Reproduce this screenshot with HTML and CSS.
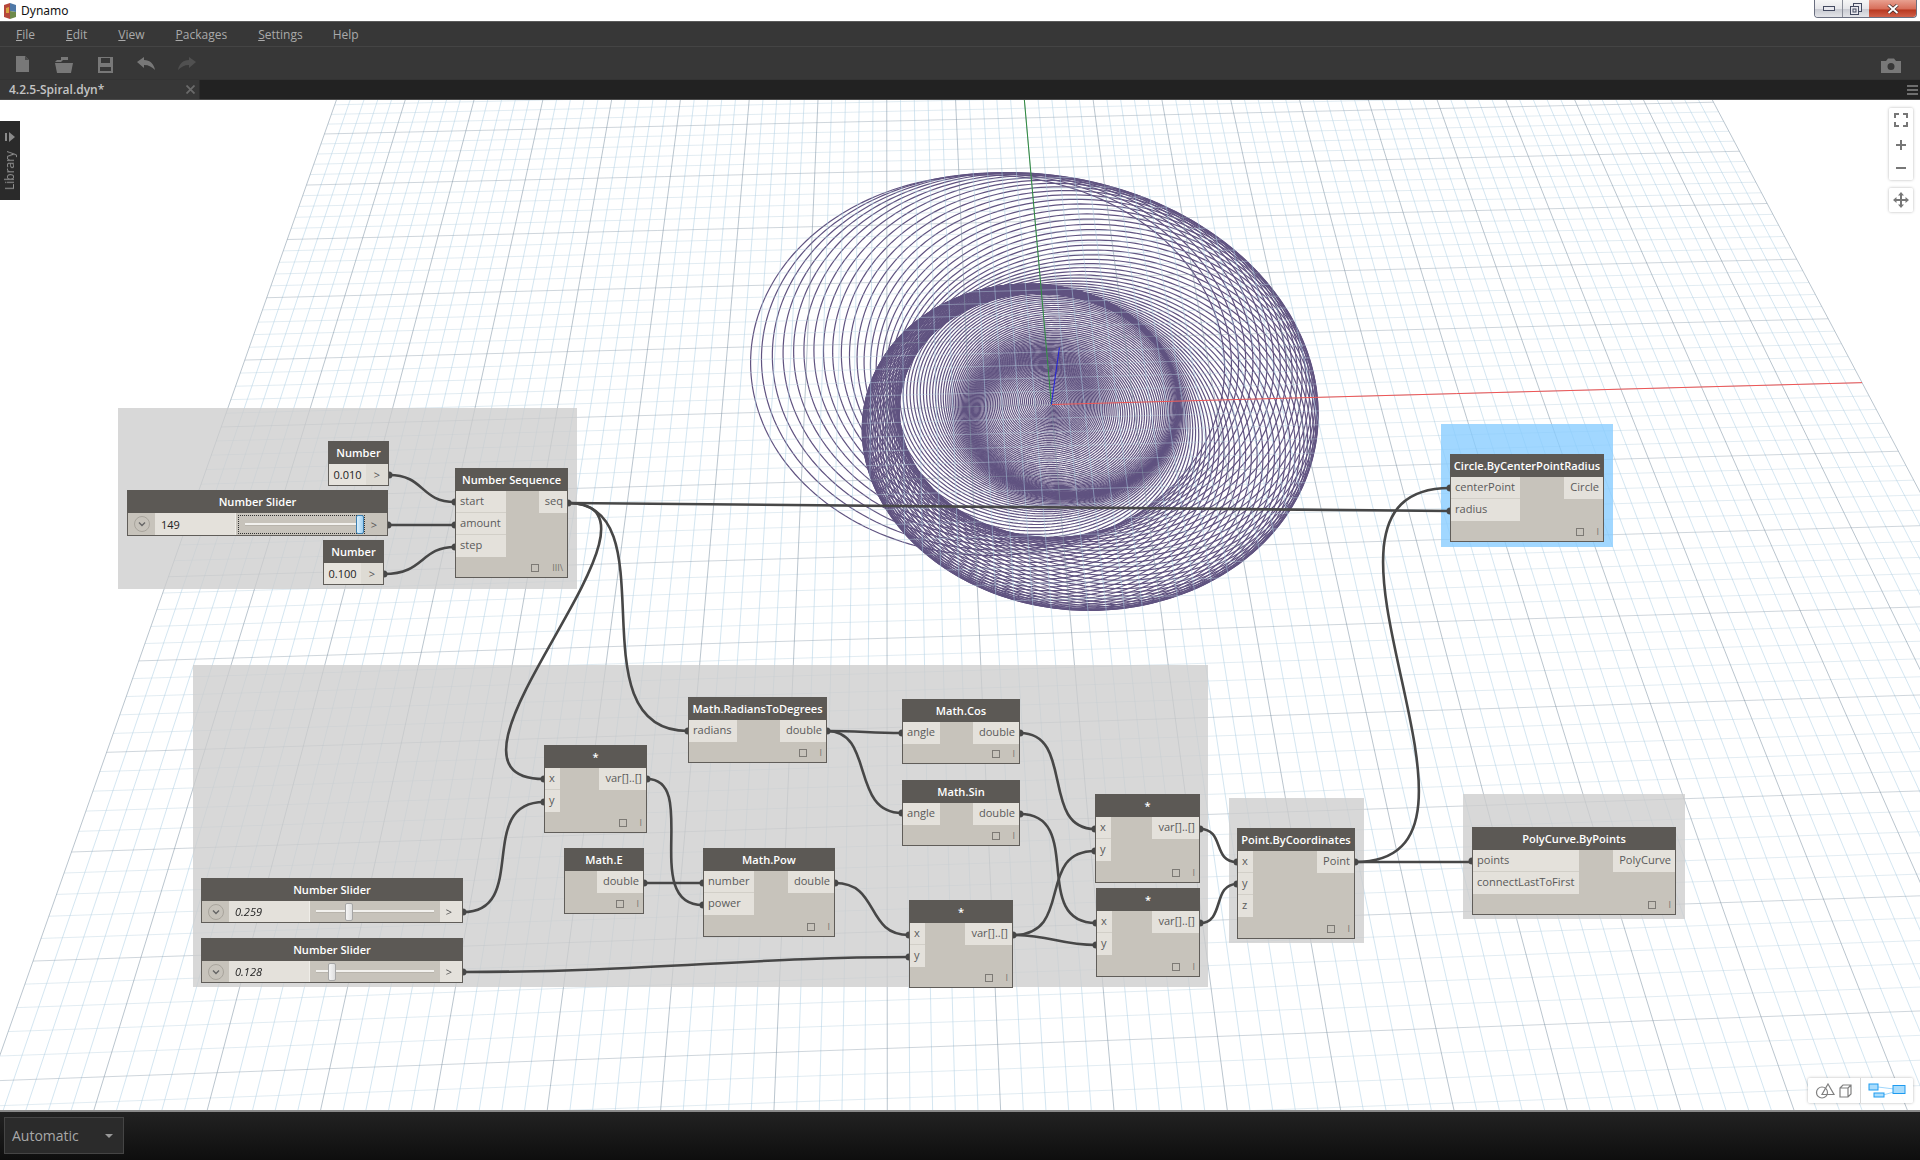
FILE: index.html
```html
<!DOCTYPE html>
<html lang="en">
<head>
    <meta charset="UTF-8">
    <title>Dynamo</title>
    <link rel="stylesheet" href="styles.css">
</head>
<body>

<div class="titlebar">
    <svg class="app-logo" width="14" height="16" viewBox="0 0 14 16">
        <polygon points="1,2 7,0 7,16 1,14" fill="#b5473c"/>
        <polygon points="7,0 13,2 13,9 7,8" fill="#4f79a8"/>
        <polygon points="7,8 13,9 13,14 7,16" fill="#6d8a4a"/>
        <polygon points="3,5 6,4 6,10 3,10" fill="#d9a441"/>
    </svg>
    <span class="app-name">Dynamo</span>
    <div class="win-buttons">
        <div class="win-btn win-min"><span class="min-glyph"></span></div>
        <div class="win-btn win-max">
            <svg width="12" height="12" viewBox="0 0 12 12"><rect x="3.5" y="0.5" width="8" height="8" fill="#e8e8ee" stroke="#444a60"/><rect x="0.5" y="3.5" width="8" height="8" fill="#e8e8ee" stroke="#444a60"/><rect x="3" y="6" width="3" height="3" fill="none" stroke="#444a60"/></svg>
        </div>
        <div class="win-btn win-close">
            <svg width="12" height="10" viewBox="0 0 12 10"><path d="M1.5 1 L10.5 9 M10.5 1 L1.5 9" stroke="#3c2a2a" stroke-width="3.4"/><path d="M1.5 1 L10.5 9 M10.5 1 L1.5 9" stroke="#fff" stroke-width="2"/></svg>
        </div>
    </div>
</div>

<div class="menubar">
    <span class="menu-item"><u>F</u>ile</span>
    <span class="menu-item"><u>E</u>dit</span>
    <span class="menu-item"><u>V</u>iew</span>
    <span class="menu-item"><u>P</u>ackages</span>
    <span class="menu-item m-settings"><u>S</u>ettings</span>
    <span class="menu-item">Help</span>
</div>

<div class="toolbar">
    <div class="tool-group">
        <svg class="tool" width="24" height="20" viewBox="0 0 24 20"><path d="M5 1 H14 L18 5 V17 H5 Z" fill="#787878"/><path d="M14 1 L18 5 H14 Z" fill="#4a4a4a"/></svg>
        <svg class="tool" width="24" height="20" viewBox="0 0 24 20"><path d="M5 5 H9 V2 H16 V5 H11 L9 7 H3 Z" fill="#787878"/><path d="M3 8 H21 L19 18 H5 Z" fill="#787878"/></svg>
        <svg class="tool" width="24" height="20" viewBox="0 0 24 20"><path d="M5 2 H20 V18 H5 Z M8 3 V8 H17 V3 Z M7 12 V16 H18 V12 Z" fill="#787878" fill-rule="evenodd"/></svg>
        <svg class="tool" width="24" height="20" viewBox="0 0 24 20"><path d="M3 7 L10 2 V5 C16 5 20 9 21 15 C18 12 15 10 10 10 V13 Z" fill="#787878"/></svg>
        <svg class="tool" width="24" height="20" viewBox="0 0 24 20"><path d="M21 7 L14 2 V5 C8 5 4 9 3 15 C6 12 9 10 14 10 V13 Z" fill="#505050"/></svg>
    </div>
    <svg class="camera" width="22" height="15" viewBox="0 0 22 15"><path d="M1 3 H6 L8 0.5 H14 L16 3 H21 V15 H1 Z M11 5 A3.5 3.5 0 1 0 11 12 A3.5 3.5 0 1 0 11 5 Z" fill="#787878" fill-rule="evenodd"/></svg>
</div>

<div class="tabbar">
    <div class="tab">
        <span class="tab-name">4.2.5-Spiral.dyn*</span>
        <svg width="9" height="9" viewBox="0 0 9 9"><path d="M0.5 0.5 L8.5 8.5 M8.5 0.5 L0.5 8.5" stroke="#6a6a6a" stroke-width="1.8"/></svg>
    </div>
    <div class="tab-menu"><span></span><span></span><span></span></div>
</div>

<div class="workspace">
    <canvas id="view" width="1920" height="1010"></canvas>

    <!-- groups -->
    <div class="group g-seq"></div>
    <div class="group g-math"></div>
    <div class="group g-point"></div>
    <div class="group g-poly"></div>
    <div class="group g-circle"></div>

    <!-- wires, coordinates are page coordinates -->
    <svg class="wires" width="1920" height="1010" viewBox="0 100 1920 1010">
        <path d="M389 475 C425 475 420 502 455 502"/>
        <path d="M388 525 H455"/>
        <path d="M384 574 C425 574 420 547 455 547"/>
        <path d="M568 503 C900 505 1200 511 1450 511"/>
        <path d="M568 503 C672 503 571 731 688 731"/>
        <path d="M568 503 C695 503 407 779 544 779"/>
        <path d="M463 912 C530 912 475 802 544 802"/>
        <path d="M463 972 C650 972 750 957 909 957"/>
        <path d="M647 779 C700 779 640 905 703 905"/>
        <path d="M644 883 H703"/>
        <path d="M827 731 C860 731 870 733 902 733"/>
        <path d="M827 731 C875 731 850 813 902 813"/>
        <path d="M1020 733 C1075 733 1040 829 1095 829"/>
        <path d="M1020 814 C1085 814 1030 923 1096 923"/>
        <path d="M835 883 C880 883 865 935 909 935"/>
        <path d="M1013 935 C1075 935 1035 851 1095 851"/>
        <path d="M1013 935 C1050 935 1060 945 1096 945"/>
        <path d="M1200 829 C1225 829 1212 862 1237 862"/>
        <path d="M1200 923 C1225 923 1212 884 1237 884"/>
        <path d="M1355 862 C1530 862 1270 488 1450 488"/>
        <path d="M1355 862 H1472"/>
        <g class="nubs">
            <circle cx="389" cy="475" r="3.5"/><circle cx="388" cy="525" r="3.5"/><circle cx="384" cy="574" r="3.5"/>
            <circle cx="455" cy="502" r="3.5"/><circle cx="455" cy="525" r="3.5"/><circle cx="455" cy="547" r="3.5"/>
            <circle cx="568" cy="503" r="3.5"/><circle cx="1450" cy="511" r="3.5"/><circle cx="1450" cy="488" r="3.5"/>
            <circle cx="688" cy="731" r="3.5"/><circle cx="544" cy="779" r="3.5"/><circle cx="544" cy="802" r="3.5"/>
            <circle cx="463" cy="912" r="3.5"/><circle cx="463" cy="972" r="3.5"/><circle cx="909" cy="957" r="3.5"/>
            <circle cx="647" cy="779" r="3.5"/><circle cx="703" cy="905" r="3.5"/><circle cx="703" cy="883" r="3.5"/>
            <circle cx="644" cy="883" r="3.5"/><circle cx="827" cy="731" r="3.5"/><circle cx="902" cy="733" r="3.5"/>
            <circle cx="902" cy="813" r="3.5"/><circle cx="1020" cy="733" r="3.5"/><circle cx="1020" cy="814" r="3.5"/>
            <circle cx="1095" cy="829" r="3.5"/><circle cx="1096" cy="923" r="3.5"/><circle cx="835" cy="883" r="3.5"/>
            <circle cx="909" cy="935" r="3.5"/><circle cx="1013" cy="935" r="3.5"/><circle cx="1095" cy="851" r="3.5"/>
            <circle cx="1096" cy="945" r="3.5"/><circle cx="1200" cy="829" r="3.5"/><circle cx="1200" cy="923" r="3.5"/>
            <circle cx="1237" cy="862" r="3.5"/><circle cx="1237" cy="884" r="3.5"/><circle cx="1355" cy="862" r="3.5"/>
            <circle cx="1472" cy="861" r="3.5"/>
        </g>
    </svg>

    <!-- number inputs -->
    <div class="node n-number1">
        <div class="node-title">Number</div>
        <div class="num-row"><span class="num-value">0.010</span><span class="num-arrow">&gt;</span></div>
    </div>
    <div class="node n-number2">
        <div class="node-title">Number</div>
        <div class="num-row"><span class="num-value">0.100</span><span class="num-arrow">&gt;</span></div>
    </div>

    <!-- sliders -->
    <div class="node n-slider1">
        <div class="node-title">Number Slider</div>
        <div class="slider-row">
            <div class="slider-expand"><svg width="16" height="16" viewBox="0 0 16 16"><circle cx="8" cy="8" r="7.500" fill="none" stroke="#a8a49c"/><path d="M5 6.500 L8 9.500 L11 6.500" fill="none" stroke="#666" stroke-width="1.400"/></svg></div>
            <span class="slider-value">149</span>
            <div class="slider-track focused"><span class="track-line"></span><span class="thumb thumb-blue thumb-149"></span></div>
            <span class="slider-arrow">&gt;</span>
        </div>
    </div>
    <div class="node n-slider2">
        <div class="node-title">Number Slider</div>
        <div class="slider-row">
            <div class="slider-expand"><svg width="16" height="16" viewBox="0 0 16 16"><circle cx="8" cy="8" r="7.500" fill="none" stroke="#a8a49c"/><path d="M5 6.500 L8 9.500 L11 6.500" fill="none" stroke="#666" stroke-width="1.400"/></svg></div>
            <span class="slider-value is-float">0.259</span>
            <div class="slider-track"><span class="track-line"></span><span class="thumb thumb-259"></span></div>
            <span class="slider-arrow">&gt;</span>
        </div>
    </div>
    <div class="node n-slider3">
        <div class="node-title">Number Slider</div>
        <div class="slider-row">
            <div class="slider-expand"><svg width="16" height="16" viewBox="0 0 16 16"><circle cx="8" cy="8" r="7.500" fill="none" stroke="#a8a49c"/><path d="M5 6.500 L8 9.500 L11 6.500" fill="none" stroke="#666" stroke-width="1.400"/></svg></div>
            <span class="slider-value is-float">0.128</span>
            <div class="slider-track"><span class="track-line"></span><span class="thumb thumb-128"></span></div>
            <span class="slider-arrow">&gt;</span>
        </div>
    </div>

    <!-- function nodes -->
    <div class="node n-sequence">
        <div class="node-title">Number Sequence</div>
        <div class="ports">
            <div class="inputs"><span>start</span><span>amount</span><span>step</span></div>
            <div class="outputs"><span>seq</span></div>
        </div>
        <div class="node-foot"><span class="foot-box"></span><span class="foot-lace">III\</span></div>
    </div>
    <div class="node n-mul1">
        <div class="node-title">*</div>
        <div class="ports">
            <div class="inputs"><span>x</span><span>y</span></div>
            <div class="outputs"><span>var[]..[]</span></div>
        </div>
        <div class="node-foot"><span class="foot-box"></span><span class="foot-lace">I</span></div>
    </div>
    <div class="node n-e">
        <div class="node-title">Math.E</div>
        <div class="ports">
            <div class="inputs"></div>
            <div class="outputs"><span>double</span></div>
        </div>
        <div class="node-foot"><span class="foot-box"></span><span class="foot-lace">I</span></div>
    </div>
    <div class="node n-rad">
        <div class="node-title">Math.RadiansToDegrees</div>
        <div class="ports">
            <div class="inputs"><span>radians</span></div>
            <div class="outputs"><span>double</span></div>
        </div>
        <div class="node-foot"><span class="foot-box"></span><span class="foot-lace">I</span></div>
    </div>
    <div class="node n-cos">
        <div class="node-title">Math.Cos</div>
        <div class="ports">
            <div class="inputs"><span>angle</span></div>
            <div class="outputs"><span>double</span></div>
        </div>
        <div class="node-foot"><span class="foot-box"></span><span class="foot-lace">I</span></div>
    </div>
    <div class="node n-sin">
        <div class="node-title">Math.Sin</div>
        <div class="ports">
            <div class="inputs"><span>angle</span></div>
            <div class="outputs"><span>double</span></div>
        </div>
        <div class="node-foot"><span class="foot-box"></span><span class="foot-lace">I</span></div>
    </div>
    <div class="node n-pow">
        <div class="node-title">Math.Pow</div>
        <div class="ports">
            <div class="inputs"><span>number</span><span>power</span></div>
            <div class="outputs"><span>double</span></div>
        </div>
        <div class="node-foot"><span class="foot-box"></span><span class="foot-lace">I</span></div>
    </div>
    <div class="node n-mul2">
        <div class="node-title">*</div>
        <div class="ports">
            <div class="inputs"><span>x</span><span>y</span></div>
            <div class="outputs"><span>var[]..[]</span></div>
        </div>
        <div class="node-foot"><span class="foot-box"></span><span class="foot-lace">I</span></div>
    </div>
    <div class="node n-mul3">
        <div class="node-title">*</div>
        <div class="ports">
            <div class="inputs"><span>x</span><span>y</span></div>
            <div class="outputs"><span>var[]..[]</span></div>
        </div>
        <div class="node-foot"><span class="foot-box"></span><span class="foot-lace">I</span></div>
    </div>
    <div class="node n-mul4">
        <div class="node-title">*</div>
        <div class="ports">
            <div class="inputs"><span>x</span><span>y</span></div>
            <div class="outputs"><span>var[]..[]</span></div>
        </div>
        <div class="node-foot"><span class="foot-box"></span><span class="foot-lace">I</span></div>
    </div>
    <div class="node n-point">
        <div class="node-title">Point.ByCoordinates</div>
        <div class="ports">
            <div class="inputs"><span>x</span><span>y</span><span>z</span></div>
            <div class="outputs"><span>Point</span></div>
        </div>
        <div class="node-foot"><span class="foot-box"></span><span class="foot-lace">I</span></div>
    </div>
    <div class="node n-poly">
        <div class="node-title">PolyCurve.ByPoints</div>
        <div class="ports">
            <div class="inputs"><span>points</span><span>connectLastToFirst</span></div>
            <div class="outputs"><span>PolyCurve</span></div>
        </div>
        <div class="node-foot"><span class="foot-box"></span><span class="foot-lace">I</span></div>
    </div>
    <div class="node n-circle">
        <div class="node-title">Circle.ByCenterPointRadius</div>
        <div class="ports">
            <div class="inputs"><span>centerPoint</span><span>radius</span></div>
            <div class="outputs"><span>Circle</span></div>
        </div>
        <div class="node-foot"><span class="foot-box"></span><span class="foot-lace">I</span></div>
    </div>

    <!-- library tab -->
    <div class="library-tab">
        <svg width="11" height="10" viewBox="0 0 11 10"><rect x="0" y="1" width="2" height="8" fill="#8a8a8a"/><polygon points="4,0 10,5 4,10" fill="#8a8a8a"/></svg>
        <span class="library-label">Library</span>
    </div>

    <!-- view controls -->
    <div class="view-controls">
        <svg width="14" height="14" viewBox="0 0 14 14"><path d="M1 5 V1 H5 M9 1 H13 V5 M13 9 V13 H9 M5 13 H1 V9" fill="none" stroke="#777" stroke-width="2"/></svg>
        <svg width="12" height="12" viewBox="0 0 12 12"><path d="M6 1 V11 M1 6 H11" stroke="#777" stroke-width="2"/></svg>
        <svg width="12" height="12" viewBox="0 0 12 12"><path d="M1 6 H11" stroke="#777" stroke-width="2"/></svg>
    </div>
    <div class="pan-control">
        <svg width="16" height="16" viewBox="0 0 16 16"><path d="M8 2 V14 M2 8 H14" stroke="#777" stroke-width="2"/><path d="M8 0 L11 3.500 H5 Z M8 16 L5 12.500 H11 Z M0 8 L3.500 5 V11 Z M16 8 L12.500 11 V5 Z" fill="#777"/></svg>
    </div>
    <div class="view-toggle">
        <div class="toggle-half">
            <svg width="38" height="16" viewBox="0 0 38 16"><circle cx="7" cy="9.500" r="5.500" fill="none" stroke="#808080" stroke-width="1.200"/><polygon points="13,1 19,11.500 7,11.500" fill="none" stroke="#808080" stroke-width="1.200"/><path d="M25 5 L28 2 H36 V11 L33 14 H25 Z M25 5 H33 V14 M33 5 L36 2" fill="none" stroke="#808080" stroke-width="1.200"/></svg>
        </div>
        <div class="toggle-half">
            <svg width="38" height="16" viewBox="0 0 38 16"><path d="M10 4 L26 6 M15 12 L26 9" stroke="#9fd6fb" stroke-width="1"/><rect x="1" y="1" width="9" height="6" fill="#a9dcfc" stroke="#1e9bf0"/><rect x="6" y="10" width="10" height="4" fill="#a9dcfc" stroke="#1e9bf0"/><rect x="25" y="2.500" width="12" height="8" fill="#a9dcfc" stroke="#1e9bf0"/></svg>
        </div>
    </div>
</div>

<div class="statusbar">
    <div class="run-select">
        <span>Automatic</span>
        <span class="run-caret"></span>
    </div>
</div>

<script src="script.js"></script>
</body>
</html>
```

FILE: styles.css
```css
html, body {
    margin: 0;
    padding: 0;
    height: 100%;
    overflow: hidden;
}
body {
    width: 1920px;
    height: 1160px;
    display: flex;
    flex-direction: column;
    background-color: #fff;
    font-family: "Open Sans", "Noto Sans", sans-serif;
    font-size: 12px;
}

/* window chrome */
.titlebar {
    height: 21px;
    flex: none;
    display: flex;
    align-items: center;
    background-color: #fff;
    position: relative;
    padding-left: 3px;
    box-sizing: border-box;
}
.app-logo {
    margin-right: 4px;
}
.app-name {
    font-family: "Noto Sans", sans-serif;
    font-size: 12px;
    color: #111;
}
.win-buttons {
    position: absolute;
    top: 0;
    right: 3px;
    height: 17px;
    display: flex;
    border: 1px solid #6a6f80;
    border-top: none;
    border-radius: 0 0 4px 4px;
    overflow: hidden;
}
.win-btn {
    display: flex;
    align-items: center;
    justify-content: center;
    height: 17px;
    background: linear-gradient(#f6f6f6, #e6e6ea 50%, #c9cbd2 55%, #e3e4e8);
}
.win-min {
    width: 27px;
    border-right: 1px solid #8a8d98;
}
.win-max {
    width: 26px;
}
.win-close {
    width: 47px;
    background: linear-gradient(#e8a090, #d8705c 50%, #b93a22 60%, #d0604a);
}
.min-glyph {
    width: 10px;
    height: 3px;
    border: 1px solid #444a60;
    background-color: #e8e8ee;
}
.menubar {
    height: 26px;
    flex: none;
    box-sizing: border-box;
    display: flex;
    align-items: center;
    padding-left: 16px;
    background-color: #373737;
    border-top: 1px solid #5a5a5a;
    border-bottom: 1px solid #444;
    color: #aaa;
}
.menu-item {
    margin-right: 31px;
}
.m-settings { margin-right: 30px; }
.toolbar {
    height: 32px;
    flex: none;
    box-sizing: border-box;
    display: flex;
    align-items: center;
    justify-content: space-between;
    padding: 4px 18px 0 11px;
    background-color: #373737;
}
.tool-group {
    display: flex;
    gap: 17px;
}
.tool {
    display: block;
}
.tabbar {
    height: 21px;
    flex: none;
    box-sizing: border-box;
    display: flex;
    align-items: center;
    justify-content: space-between;
    background-color: #222;
    border-top: 1px solid #333;
    border-bottom: 1px solid #4a4a4a;
}
.tab {
    width: 200px;
    height: 100%;
    box-sizing: border-box;
    padding: 0 4px 0 9px;
    display: flex;
    align-items: center;
    justify-content: space-between;
    background-color: #373737;
    border-right: 1px solid #2c2c2c;
}
.tab-name {
    font-weight: 600;
    color: #c4c4c4;
}
.tab-menu {
    width: 11px;
    margin-right: 2px;
    display: flex;
    flex-direction: column;
    gap: 2px;
}
.tab-menu span {
    height: 2px;
    background-color: #6e6e6e;
}

/* graph canvas */
.workspace {
    flex: 1;
    position: relative;
    overflow: hidden;
    background-color: #fff;
}
#view {
    position: absolute;
    top: 0;
    left: 0;
}
.group {
    position: absolute;
    background-color: rgba(205, 205, 205, 0.78);
}
.g-seq { left: 118px; top: 308px; width: 459px; height: 181px; }
.g-math { left: 193px; top: 565px; width: 1015px; height: 322px; }
.g-point { left: 1229px; top: 698px; width: 135px; height: 145px; }
.g-poly { left: 1463px; top: 694px; width: 222px; height: 125px; }
.g-circle { left: 1441px; top: 324px; width: 172px; height: 123px; background-color: rgba(135, 204, 255, 0.78); }
.wires {
    position: absolute;
    top: 0;
    left: 0;
}
.wires path {
    fill: none;
    stroke: #474747;
    stroke-width: 2.6;
}
.nubs circle {
    fill: #474747;
}

/* nodes */
.node {
    position: absolute;
    box-sizing: border-box;
    display: flex;
    flex-direction: column;
    background-color: #c7c3bb;
    border: 1px solid #605d59;
    color: #5a5a5a;
    font-size: 11.1px;
}
.node-title {
    height: 23px;
    flex: none;
    box-sizing: border-box;
    padding-bottom: 1px;
    margin: -1px -1px 0;
    display: flex;
    align-items: center;
    justify-content: center;
    background-color: #5c5955;
    color: #fff;
    font-weight: 600;
    font-size: 11.1px;
    white-space: nowrap;
}
.ports {
    display: flex;
    justify-content: space-between;
    align-items: flex-start;
}
.inputs, .outputs {
    display: flex;
    flex-direction: column;
}
.inputs span, .outputs span {
    height: 22px;
    line-height: 20px;
    box-sizing: border-box;
    background-color: #e4e1db;
    white-space: nowrap;
}
.inputs span {
    padding: 0 5px 0 4px;
    border-bottom: 1px solid #d2cfc8;
}
.inputs span:last-child {
    border-bottom: none;
}
.outputs span {
    padding: 0 4px 0 6px;
    text-align: right;
}
.node-foot {
    flex: 1;
    display: flex;
    align-items: flex-end;
    justify-content: flex-end;
    padding: 0 4px 5px 0;
}
.foot-box {
    width: 6px;
    height: 6px;
    border: 1px solid #7d7a75;
    margin-right: 12px;
}
.foot-lace {
    font-size: 9px;
    line-height: 9px;
    color: #77736e;
    min-width: 3px;
    text-align: right;
}
.n-sequence .foot-box { margin-right: 13px; }

.n-number1 { left: 328px; top: 341px; width: 61px; height: 45px; }
.n-number2 { left: 323px; top: 440px; width: 61px; height: 45px; }
.n-sequence { left: 455px; top: 368px; width: 113px; height: 110px; }
.n-slider1 { left: 127px; top: 390px; width: 261px; height: 46px; }
.n-slider2 { left: 201px; top: 778px; width: 262px; height: 45px; }
.n-slider3 { left: 201px; top: 838px; width: 262px; height: 45px; }
.n-mul1 { left: 544px; top: 645px; width: 103px; height: 88px; }
.n-e { left: 564px; top: 748px; width: 80px; height: 66px; }
.n-rad { left: 688px; top: 597px; width: 139px; height: 66px; }
.n-cos { left: 902px; top: 599px; width: 118px; height: 65px; }
.n-sin { left: 902px; top: 680px; width: 118px; height: 66px; }
.n-pow { left: 703px; top: 748px; width: 132px; height: 89px; }
.n-mul2 { left: 909px; top: 800px; width: 104px; height: 88px; }
.n-mul3 { left: 1095px; top: 694px; width: 105px; height: 89px; }
.n-mul4 { left: 1096px; top: 788px; width: 104px; height: 89px; }
.n-point { left: 1237px; top: 728px; width: 118px; height: 111px; }
.n-poly { left: 1472px; top: 727px; width: 204px; height: 88px; }
.n-circle { left: 1450px; top: 354px; width: 154px; height: 88px; }

.num-row {
    flex: 1;
    display: flex;
    align-items: stretch;
    color: #222;
    font-size: 11px;
}
.num-value {
    width: 37px;
    display: flex;
    align-items: center;
    justify-content: center;
    background-color: #e6e3dd;
}
.num-arrow {
    flex: 1;
    display: flex;
    align-items: center;
    justify-content: center;
    background-color: #dedbd4;
    color: #555;
}

/* sliders */
.slider-row {
    flex: 1;
    display: flex;
    align-items: stretch;
    font-size: 11px;
}
.slider-expand {
    width: 27px;
    flex: none;
    display: flex;
    align-items: center;
    justify-content: center;
}
.slider-value {
    width: 81px;
    flex: none;
    display: flex;
    align-items: center;
    padding-left: 6px;
    box-sizing: border-box;
    background-color: #e4e1db;
    color: #222;
    border-right: 1px solid #efede8;
}
.slider-value.is-float {
    font-style: italic;
}
.slider-track {
    flex: 1;
    position: relative;
    display: flex;
    align-items: center;
    padding: 0 6px;
}
.slider-track.focused {
    margin: 2px 0 1px 2px;
    border: 1px dotted #333;
}
.track-line {
    flex: 1;
    height: 2px;
    background-color: #f2f1ee;
    border-bottom: 1px solid #b8b4ac;
}
.thumb {
    position: absolute;
    top: 50%;
    width: 8px;
    height: 18px;
    margin-top: -9px;
    box-sizing: border-box;
    background: linear-gradient(90deg, #f5f5f5, #dedede);
    border: 1px solid #a6a6a6;
    border-radius: 2px;
}
.thumb-blue {
    background: linear-gradient(90deg, #dcf0fc, #9fd0f2);
    border-color: #3c7fb1;
}
.thumb-149 { right: 0; height: 19px; margin-top: -10px; }
.thumb-259 { left: 35px; }
.thumb-128 { left: 18px; }
.slider-arrow {
    width: 22px;
    flex: none;
    box-sizing: border-box;
    padding-right: 4px;
    display: flex;
    align-items: center;
    justify-content: center;
    background-color: #e4e1db;
    color: #555;
}
.n-slider1 .slider-arrow { background-color: #c7c3bb; }

/* overlays on the canvas */
.library-tab {
    position: absolute;
    left: 0;
    top: 21px;
    width: 20px;
    height: 79px;
    box-sizing: border-box;
    padding-top: 11px;
    display: flex;
    flex-direction: column;
    align-items: center;
    gap: 9px;
    background-color: #2a2a2a;
}
.library-label {
    writing-mode: vertical-rl;
    transform: rotate(180deg);
    color: #959595;
    font-size: 12px;
    line-height: 16px;
}
.view-controls, .pan-control, .view-toggle {
    position: absolute;
    box-sizing: border-box;
    background-color: rgba(255, 255, 255, 0.92);
    border-radius: 2px;
    box-shadow: 0 0 3px rgba(0, 0, 0, 0.3);
}
.view-controls {
    left: 1889px;
    top: 8px;
    width: 24px;
    height: 72px;
    display: flex;
    flex-direction: column;
    align-items: center;
    gap: 11.500px;
    padding-top: 5px;
}
.pan-control {
    left: 1889px;
    top: 88px;
    width: 24px;
    height: 24px;
    display: flex;
    align-items: center;
    justify-content: center;
}
.view-toggle {
    left: 1808px;
    top: 978px;
    width: 105px;
    height: 25px;
    display: flex;
}
.toggle-half {
    flex: 1;
    display: flex;
    align-items: center;
    justify-content: center;
}
.toggle-half:first-child {
    border-right: 1px solid #d8d8d8;
}

/* run bar */
.statusbar {
    height: 50px;
    flex: none;
    box-sizing: border-box;
    padding: 5px 0 0 4px;
    background: linear-gradient(#222, #0e0e0e);
    border-top: 2px solid #8a8a8a;
}
.run-select {
    width: 120px;
    height: 37px;
    box-sizing: border-box;
    display: flex;
    align-items: center;
    justify-content: space-between;
    padding: 0 10px 0 7px;
    background-color: #2b2b2b;
    border: 1px solid #454545;
    color: #a8a8a8;
    font-size: 14px;
}
.run-caret {
    width: 0;
    height: 0;
    border-left: 4px solid transparent;
    border-right: 4px solid transparent;
    border-top: 4px solid #999;
}
```

FILE: script.js
```js
// 3D background preview: ground grid, axes and the spiral of circles.
const canvas = document.getElementById("view");
const ctx = canvas.getContext("2d");

const VP_X = 886, VP_Y = -1460;
const DEPTH_K = 256000, DEPTH_D = 137.3;
const UNIT_X = 0.00882, AXIS_X = 0.0887;
const TILT = 69000;

// model x,y (ground plane) to screen, y still in page coordinates
function project(x, y) {
    const a = AXIS_X + UNIT_X * x;
    const d0 = DEPTH_K / (DEPTH_D + y);
    // rows lean towards a far vanishing point on the right
    const d = d0 * (1 + (1052 - VP_X) / TILT) / (1 + d0 * a / TILT);
    return [VP_X + a * d, VP_Y + d - 100];
}

function line(a, b, color, width) {
    ctx.strokeStyle = color;
    ctx.lineWidth = width;
    ctx.beginPath();
    ctx.moveTo(a[0], a[1]);
    ctx.lineTo(b[0], b[1]);
    ctx.stroke();
}

// same graph as the nodes: center = 0.128 * e^(0.259 t) at angle t, radius t
function drawSpiral() {
    ctx.strokeStyle = "#605380";
    ctx.lineWidth = 1.2;
    for (let i = 0; i < 149; i++) {
        const t = 0.01 + i * 0.1;
        const b = 0.128 * Math.exp(0.259 * t);
        const cx = b * Math.cos(t);
        const cy = b * Math.sin(t);
        ctx.beginPath();
        for (let k = 0; k <= 200; k++) {
            const a = k / 200 * Math.PI * 2;
            const p = project(cx + t * Math.cos(a), cy + t * Math.sin(a));
            if (k === 0) ctx.moveTo(p[0], p[1]);
            else ctx.lineTo(p[0], p[1]);
        }
        ctx.stroke();
    }
}

function drawGrid() {
    for (let pass = 0; pass < 2; pass++) {
        for (let i = -50; i <= 50; i++) {
            const major = i % 5 === 0;
            if (major !== (pass === 1)) continue;
            line(project(i, -50), project(i, 50), major ? "rgba(130,150,165,0.55)" : "rgba(170,205,228,0.5)", 1);
            line(project(-50, i), project(50, i), major ? "rgba(140,158,172,0.42)" : "rgba(185,210,225,0.42)", 1);
        }
    }
}

function drawAxes() {
    const o = project(0, 0);
    line(o, project(50, 0), "#ee5555", 1);
    line(o, project(0, 50), "#2e8b3e", 1);
    line(o, [o[0] + 8, o[1] - 57], "#2222dd", 1);
}

drawSpiral();
drawGrid();
drawAxes();
```
